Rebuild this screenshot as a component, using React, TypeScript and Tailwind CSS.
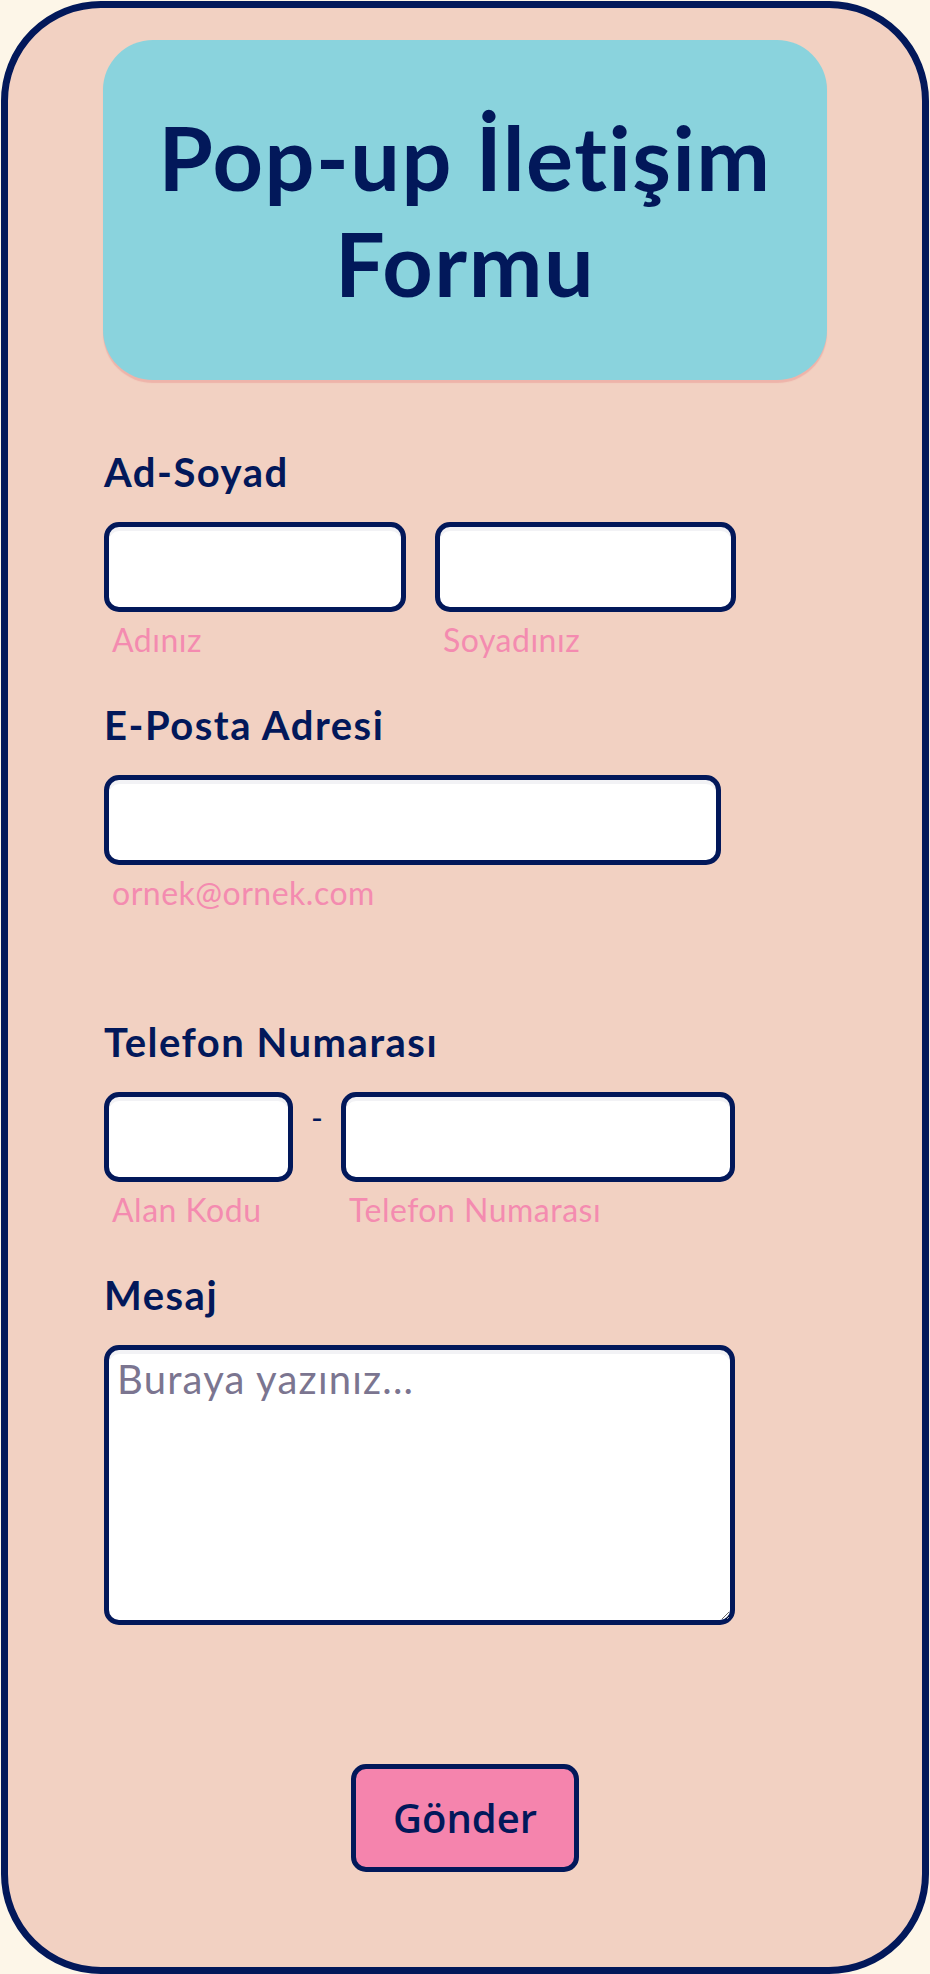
import type { ReactNode } from "react";

// ================= Small parts =================
function Label({ children }: { children: ReactNode }) {
  return (
    <label className="mb-[25px] block text-[40px] font-bold leading-[50px] tracking-[1.5px]">
      {children}
    </label>
  );
}

function Hint({ children }: { children: ReactNode }) {
  return (
    <p className="mt-[8px] pl-[8px] text-[32px] leading-[40px] tracking-[0.5px] text-[#f48bb0]">
      {children}
    </p>
  );
}

function Input() {
  return (
    <input
      type="text"
      className="block h-[90px] w-full rounded-[15px] border-[5px] border-[#02185a] bg-white px-3 text-[30px] shadow-[inset_0_4px_0_#f2f2f5] outline-none"
    />
  );
}

export default function App() {
  return (
    <div className="bg-[#fdf6e8] p-px font-['Lato',sans-serif] text-[#02185a]">
      <form className="rounded-[100px] border-[7px] border-[#02185a] bg-[#f2d1c2] px-[95px] pt-[32px] pb-[95px]">
        {/* Judul */}
        <div className="flex h-[340px] w-[724px] items-center justify-center rounded-[50px] bg-[#8ad3dd] px-6 shadow-[0_3px_1px_#eeb4aa]">
          <h1 className="text-center text-[88px] font-bold leading-[106px] tracking-[1.5px]">
            Pop-up İletişim Formu
          </h1>
        </div>

        <div className="pl-px pt-[67px]">
          {/* Ad-Soyad */}
          <Label>Ad-Soyad</Label>
          <div className="flex gap-[29px]">
            <div className="w-[302px]">
              <Input />
              <Hint>Adınız</Hint>
            </div>
            <div className="w-[301px]">
              <Input />
              <Hint>Soyadınız</Hint>
            </div>
          </div>

          {/* E-Posta */}
          <div className="mt-[40px]">
            <Label>E-Posta Adresi</Label>
            <div className="w-[617px]">
              <Input />
              <Hint>ornek@ornek.com</Hint>
            </div>
          </div>

          {/* Telefon */}
          <div className="mt-[104px]">
            <Label>Telefon Numarası</Label>
            <div className="flex w-[631px]">
              <div className="w-[189px]">
                <Input />
                <Hint>Alan Kodu</Hint>
              </div>
              <span className="w-[48px] pt-[6px] text-center text-[32px] leading-[40px]">
                -
              </span>
              <div className="w-[394px]">
                <Input />
                <Hint>Telefon Numarası</Hint>
              </div>
            </div>
          </div>

          {/* Mesaj */}
          <div className="mt-[40px]">
            <Label>Mesaj</Label>
            <textarea
              placeholder="Buraya yazınız..."
              className="block h-[280px] w-[631px] rounded-[15px] border-[5px] border-[#02185a] bg-white pl-[8px] pt-[5px] text-[40px] leading-[48px] tracking-[1.2px] shadow-[inset_0_4px_0_#f2f2f5] outline-none placeholder:text-[#7b7590]"
            />
          </div>
        </div>

        {/* Tombol */}
        <div className="mt-[139px] flex justify-center">
          <button
            type="button"
            className="h-[108px] w-[228px] rounded-[15px] border-[5px] border-[#02185a] bg-[#f584ad] font-['Open_Sans',sans-serif] text-[40px] font-semibold"
          >
            Gönder
          </button>
        </div>
      </form>
    </div>
  );
}
